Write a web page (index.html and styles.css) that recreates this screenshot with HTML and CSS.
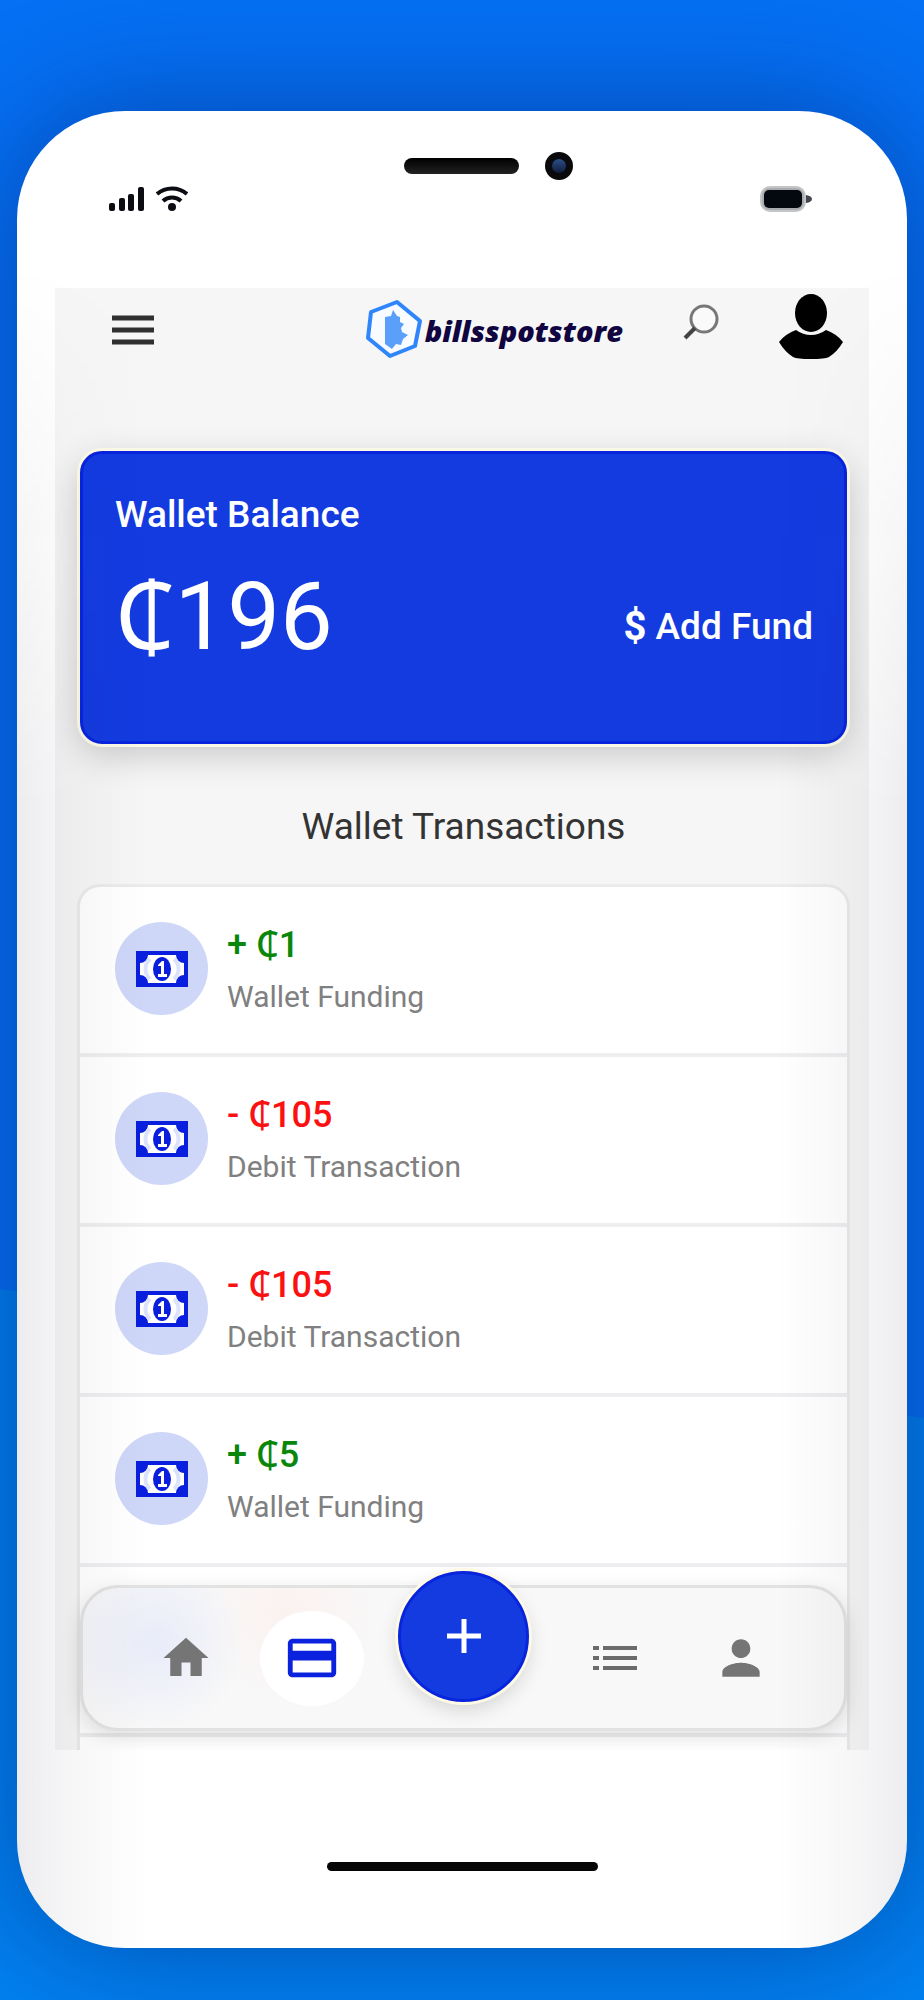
FILE: index.html
```html
<!DOCTYPE html>
<html lang="en">
<head>
<meta charset="utf-8">
<meta name="viewport" content="width=device-width, initial-scale=1">
<title>Billsspotstore Wallet</title>
<link rel="stylesheet" href="styles.css">
</head>
<body>
<svg class="sprite" aria-hidden="true">
  <symbol id="cash" viewBox="0 0 52 36">
    <rect width="52" height="36" fill="#0a1fdd"/>
    <path d="M12 4h28a8 8 0 0 0 8 8v12a8 8 0 0 0-8 8H12a8 8 0 0 0-8-8V12a8 8 0 0 0 8-8z" fill="#fff"/>
    <path d="M14 8c-6 5-6 15 0 20M38 8c6 5 6 15 0 20" fill="none" stroke="#dce2fb" stroke-width="4"/>
    <ellipse cx="26" cy="18" rx="9" ry="12" fill="#0a1fdd"/>
    <path d="M22 14l4-4h2v13h3v3h-9v-3h3v-8h-3z" fill="#fff"/>
  </symbol>
</svg>
<div class="page">
  <div class="phone">
    <div class="status">
      <svg class="signal" width="80" height="28" viewBox="0 0 80 28" role="img" aria-label="Signal and Wi-Fi">
        <g fill="#0b0d12"><rect x="1" y="18" width="6" height="8" rx="2"/><rect x="11" y="13" width="6" height="13" rx="2"/><rect x="20" y="9" width="6" height="17" rx="2"/><rect x="30" y="2" width="6" height="24" rx="2"/><circle cx="64" cy="22" r="4"/></g>
        <path d="M49 9a23 23 0 0 1 30 0M55 16a13 13 0 0 1 18 0" fill="none" stroke="#0b0d12" stroke-width="4"/>
      </svg>
      <div class="notch"><span class="speaker"></span><span class="camera"></span></div>
      <svg class="battery" width="54" height="28" viewBox="0 0 54 28" role="img" aria-label="Battery full">
        <rect x="2" y="2" width="44" height="24" rx="9" fill="#aaabae" stroke="#c4c5c7" stroke-width="2"/>
        <rect x="5" y="5" width="38" height="18" rx="5" fill="#04080f"/>
        <path d="M47 10q6 1 6 4t-6 4z" fill="#44474d"/>
      </svg>
    </div>
    <div class="screen">
      <header class="top">
        <button class="menu" aria-label="Menu"><svg width="42" height="30" viewBox="0 0 42 30"><path d="M0 3h42M0 15h42M0 27h42" stroke="#303030" stroke-width="5"/></svg></button>
        <a class="logo" href="#">
          <svg width="58" height="60" viewBox="0 0 58 60" aria-hidden="true">
            <path d="M32 3L55 22 50 47 25 57 3 39 6 13z" fill="#f8fbff" stroke="#2f86fb" stroke-width="4" stroke-linejoin="round"/>
            <path d="M20 18l6-1 2-6 4 6 3 1v5l4 2-3 4 1 4 6 3-5 4-2 6-5-1-4 5-7-5z" fill="#5aa0fa"/>
          </svg>
          <span>billsspotstore</span>
        </a>
        <button class="search" aria-label="Search"><svg width="36" height="36" viewBox="0 0 36 36"><circle cx="21" cy="15" r="13" fill="#fafafa" stroke="#777" stroke-width="3"/><path d="M12 24L2 34" stroke="#444" stroke-width="4"/></svg></button>
        <button aria-label="Profile"><svg width="64" height="68" viewBox="0 0 64 68"><ellipse cx="32" cy="20" rx="16" ry="19"/><path d="M17 37q7 5 15 5t15-5q11 4 17 12-6 10-14 15-4 2-18 2t-18-2Q6 59 0 49q6-8 17-12z"/></svg></button>
      </header>
      <main>
        <section class="balance">
          <h1>Wallet Balance</h1>
          <div class="line">
            <strong>₵196</strong>
            <button class="add"><span aria-hidden="true">$</span>Add Fund</button>
          </div>
        </section>
        <h2>Wallet Transactions</h2>
        <ul class="list">
          <li><span class="disc"><svg width="52" height="36"><use href="#cash"/></svg></span><div><b class="in">+ ₵1</b><p>Wallet Funding</p></div></li>
          <li><span class="disc"><svg width="52" height="36"><use href="#cash"/></svg></span><div><b class="out">- ₵105</b><p>Debit Transaction</p></div></li>
          <li><span class="disc"><svg width="52" height="36"><use href="#cash"/></svg></span><div><b class="out">- ₵105</b><p>Debit Transaction</p></div></li>
          <li><span class="disc"><svg width="52" height="36"><use href="#cash"/></svg></span><div><b class="in">+ ₵5</b><p>Wallet Funding</p></div></li>
          <li></li>
        </ul>
      </main>
      <nav class="tabs">
        <a href="#" aria-label="Home"><svg width="54" height="54" viewBox="0 0 24 24" fill="#757575"><path d="M10 20v-6h4v6h5v-8h3L12 3 2 12h3v8z"/></svg></a>
        <a href="#" class="active" aria-label="Wallet"><svg width="58" height="58" viewBox="0 0 24 24" fill="#0a22dd"><path d="M20 4H4c-1.110 0-1.990.89-1.990 2L2 18c0 1.110.89 2 2 2h16c1.110 0 2-.89 2-2V6c0-1.110-.89-2-2-2zm0 14H4v-5h16v5zm0-9H4V6h16v3z"/></svg></a>
        <button class="fab" aria-label="Add"><svg width="34" height="34" viewBox="0 0 34 34"><path d="M17 0v34M0 17h34" stroke="#fff" stroke-width="5"/></svg></button>
        <a href="#" aria-label="List"><svg width="44" height="26" viewBox="0 0 44 26"><path d="M0 3h6M10 3h34M0 13h6M10 13h34M0 23h6M10 23h34" stroke="#6b6b6b" stroke-width="4"/></svg></a>
        <a href="#" aria-label="Account"><svg width="56" height="56" viewBox="0 0 24 24" fill="#757575"><path d="M12 12c2.210 0 4-1.790 4-4s-1.790-4-4-4-4 1.790-4 4 1.790 4 4 4zm0 2c-2.670 0-8 1.340-8 4v2h16v-2c0-2.660-5.330-4-8-4z"/></svg></a>
      </nav>
    </div>
    <div class="home"></div>
  </div>
</div>
</body>
</html>
```
FILE: styles.css
```css
* { box-sizing: border-box; }
body { margin: 0; font-family: Roboto, "Noto Sans", sans-serif; color: #333; }
h1, h2, p, ul { margin: 0; padding: 0; font-weight: 400; }
button { font: inherit; color: inherit; background: none; border: 0; padding: 0; cursor: pointer; }
svg { display: block; }
.sprite { position: absolute; width: 0; height: 0; }

.page { position: relative; z-index: 0; min-height: 100vh; padding: 111px 17px 53px; background: #0570f3; overflow: hidden; }
.page::before { content: ""; position: absolute; z-index: -1; inset: 0; background: #0280f0; clip-path: polygon(0 1289px, 100% 1418px, 100% 100%, 0 100%); }

.phone { position: relative; padding: 0 38px; border-radius: 108px; background: #fff; box-shadow: 0 0 120px rgba(0, 20, 90, .45); }
.phone::after {
  content: ""; position: absolute; inset: 0; border-radius: inherit; pointer-events: none;
  background: linear-gradient(90deg, rgba(20, 20, 50, .08), rgba(20, 20, 50, .04) 50px, transparent 130px calc(100% - 130px), rgba(20, 20, 50, .04) calc(100% - 50px), rgba(20, 20, 50, .08));
  mask-image: linear-gradient(transparent 150px, #000 700px);
}

.status { display: grid; grid-template-columns: 1fr auto 1fr; align-items: start; height: 177px; padding: 41px 56px 0 53px; }
.signal, .battery { margin-top: 33px; }
.battery { justify-self: end; }
.notch { display: flex; align-items: center; gap: 26px; padding-left: 56px; }
.speaker { width: 115px; height: 16px; border-radius: 8px; background: linear-gradient(#000, #222); }
.camera { width: 28px; height: 28px; border: 7px solid #0a0a0c; border-radius: 50%; background: linear-gradient(#2b4f86, #101d3c); }

.screen { position: relative; padding: 0 22px 0 25px; background: #f6f6f6; overflow: hidden; }
.top { display: flex; align-items: flex-start; gap: 60px; height: 163px; padding: 5px 4px 0 32px; }
.menu { margin-top: 22px; }
.search { margin-top: 11px; }
.logo { display: flex; align-items: center; gap: 2px; margin: 6px 0 0 auto; font: italic 800 29px/36px "Open Sans", sans-serif; color: #100540; text-decoration: none; }
.logo span { padding-top: 4px; }

.balance { min-height: 293px; padding: 37px 31px 0 32px; border: 3px solid #0825dd; border-radius: 22px; background: #143be0; color: #fff; box-shadow: 0 0 0 3px #fbf8e6, 0 10px 36px rgba(0, 0, 0, .2); }
h1 { font-size: 37px; line-height: 48px; font-weight: 500; }
.line { display: flex; align-items: center; justify-content: space-between; padding-top: 22px; }
.line strong { font-size: 94px; line-height: 112px; font-weight: 400; }
.add { display: flex; align-items: center; gap: 9px; margin-top: 20px; font-size: 37px; line-height: 48px; font-weight: 500; }
.add span { font-size: 40px; font-weight: 700; }

h2 { padding: 59px 0 36px; font-size: 37px; line-height: 48px; text-align: center; }
.list { list-style: none; padding-bottom: 13px; border-radius: 20px 20px 0 0; background: #fff; box-shadow: 0 0 0 3px #ebebed; }
.list li { display: flex; align-items: center; gap: 19px; height: 170px; padding: 0 35px 3px; border-bottom: 4px solid #eeeef0; }
.list li > div { padding-top: 8px; }
.disc { display: grid; place-items: center; width: 93px; height: 93px; border-radius: 50%; background: #ced7f8; }
.list b { display: block; font-size: 36px; line-height: 48px; font-weight: 500; }
.list p { font-size: 30px; line-height: 56px; color: #808080; }
.in { color: #0a870a; }
.out { color: #fb1111; }

.tabs {
  position: absolute; left: 25px; right: 22px; bottom: 19px;
  display: grid; grid-template-columns: 104px 104px 155px 104px 104px; align-items: center; justify-items: center; justify-content: center; column-gap: 22px;
  height: 146px; border: 3px solid #e2e2e2; border-radius: 38px; box-shadow: 0 6px 20px rgba(0, 0, 0, .12);
  background: radial-gradient(circle at 72px 54px, #e8ebf9, transparent 90px), radial-gradient(circle at 204px 24px, #fbf2f0, transparent 90px), #f8f8f8;
}
.tabs a { display: grid; place-items: center; width: 104px; height: 95px; border-radius: 50%; }
.tabs .active { background: #fff; }
.fab { display: grid; place-items: center; width: 131px; height: 131px; margin: -22px 0 22px; border-radius: 50%; background: #143be0; border: 3px solid #0825dd; box-shadow: 0 0 0 3px #fdf9e4, 0 8px 20px rgba(0, 0, 0, .15); }

.home { height: 198px; padding-top: 112px; }
.home::before { content: ""; display: block; width: 271px; height: 9px; margin: 0 auto; border-radius: 5px; background: #060606; }
```
